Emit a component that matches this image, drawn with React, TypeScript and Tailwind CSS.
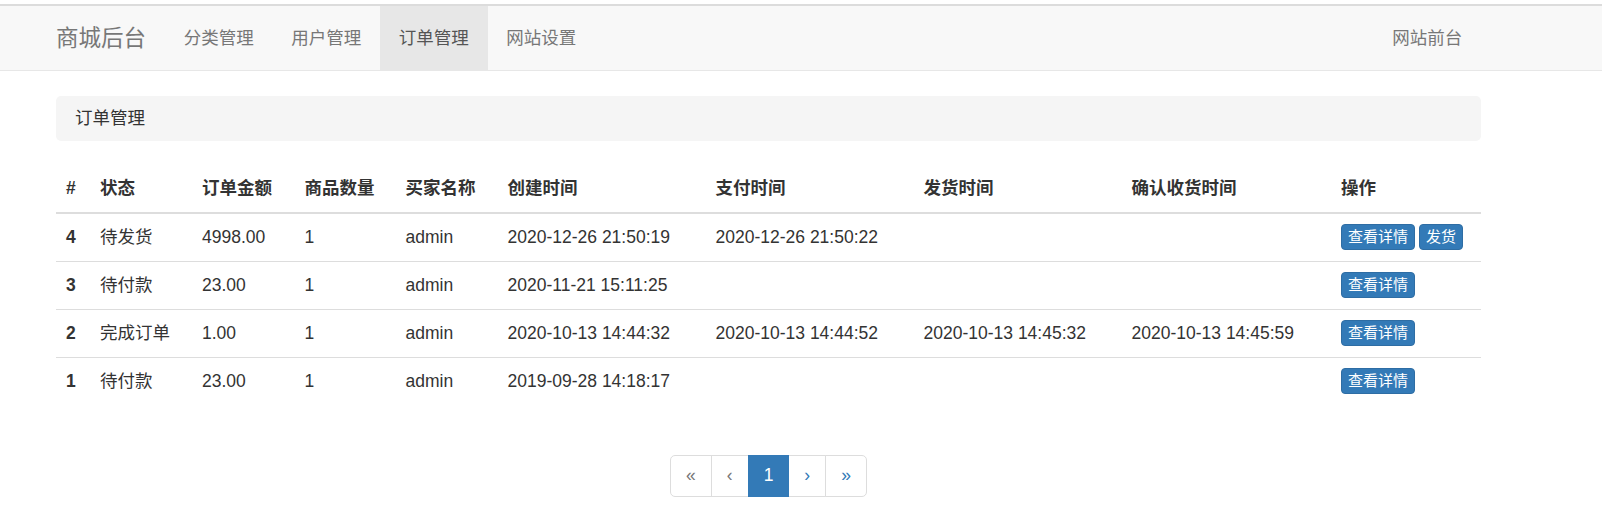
import React from "react";

const font = "font-['Liberation_Sans','Noto_Sans_CJK_SC',sans-serif]";

const navItems = ["分类管理", "用户管理", "订单管理", "网站设置"];

const cols =
  "grid grid-cols-[34px_102px_102.5px_101px_102px_208px_208px_208px_209.5px_150px]";

const headers = [
  "#",
  "状态",
  "订单金额",
  "商品数量",
  "买家名称",
  "创建时间",
  "支付时间",
  "发货时间",
  "确认收货时间",
  "操作",
];

type Order = {
  id: number;
  status: string;
  amount: string;
  count: string;
  buyer: string;
  created: string;
  paid: string;
  shipped: string;
  confirmed: string;
  ship?: boolean;
};

const orders: Order[] = [
  {
    id: 4,
    status: "待发货",
    amount: "4998.00",
    count: "1",
    buyer: "admin",
    created: "2020-12-26 21:50:19",
    paid: "2020-12-26 21:50:22",
    shipped: "",
    confirmed: "",
    ship: true,
  },
  {
    id: 3,
    status: "待付款",
    amount: "23.00",
    count: "1",
    buyer: "admin",
    created: "2020-11-21 15:11:25",
    paid: "",
    shipped: "",
    confirmed: "",
  },
  {
    id: 2,
    status: "完成订单",
    amount: "1.00",
    count: "1",
    buyer: "admin",
    created: "2020-10-13 14:44:32",
    paid: "2020-10-13 14:44:52",
    shipped: "2020-10-13 14:45:32",
    confirmed: "2020-10-13 14:45:59",
  },
  {
    id: 1,
    status: "待付款",
    amount: "23.00",
    count: "1",
    buyer: "admin",
    created: "2019-09-28 14:18:17",
    paid: "",
    shipped: "",
    confirmed: "",
  },
];

const XsButton = ({ children }: { children: React.ReactNode }) => (
  <button className="h-[26px] px-[6px] text-[15px] leading-[22px] text-white bg-[#337ab7] border border-[#2e6da4] rounded-[4px]">
    {children}
  </button>
);

const Navbar = () => (
  <div className="mt-[4px] border-t-2 border-[#dcdcdc]">
    <nav className="h-[65px] bg-[#f8f8f8] border-b border-[#e7e7e7]">
      <div className="ml-[37px] w-[1444px] h-full flex items-stretch">
        <a className="px-[19px] flex items-center text-[22.5px] leading-[25px] text-[#777]">
          商城后台
        </a>
        <ul className="flex">
          {navItems.map((item) => (
            <li key={item}>
              <a
                className={`h-full px-[18.75px] flex items-center text-[17.5px] leading-[25px] ${
                  item === "订单管理"
                    ? "bg-[#e7e7e7] text-[#555]"
                    : "text-[#777]"
                }`}
              >
                {item}
              </a>
            </li>
          ))}
        </ul>
        <a className="ml-auto px-[18.75px] flex items-center text-[17.5px] leading-[25px] text-[#777]">
          网站前台
        </a>
      </div>
    </nav>
  </div>
);

const Pagination = () => {
  const items = [
    { label: "«", disabled: true },
    { label: "‹", disabled: true },
    { label: "1", active: true },
    { label: "›" },
    { label: "»" },
  ];
  return (
    <div className="mt-[50px] flex justify-center">
      <ul className="flex">
        {items.map((item, i) => (
          <li key={i}>
            <a
              className={`h-[42.5px] px-[15px] flex items-center text-[17.5px] leading-[25px] border ${
                i > 0 ? "-ml-px" : ""
              } ${i === 0 ? "rounded-l-[5px]" : ""} ${
                i === items.length - 1 ? "rounded-r-[5px]" : ""
              } ${
                item.active
                  ? "bg-[#337ab7] border-[#337ab7] text-white relative"
                  : item.disabled
                  ? "bg-white border-[#ddd] text-[#777]"
                  : "bg-white border-[#ddd] text-[#337ab7]"
              }`}
            >
              {item.label}
            </a>
          </li>
        ))}
      </ul>
    </div>
  );
};

export default function App() {
  return (
    <div className={`${font} bg-white text-[#333] min-h-[528px]`}>
      <Navbar />

      <div className="ml-[56px] w-[1425px] mt-[25px]">
        <div className="h-[45px] px-[19px] flex items-center bg-[#f5f5f5] rounded-[5px] text-[17.5px] leading-[25px]">
          订单管理
        </div>

        <div className="mt-[25px] text-[17.5px] leading-[25px]">
          <div className={`${cols} h-[47.5px] items-center border-b-[2.5px] border-[#ddd] font-bold`}>
            {headers.map((h) => (
              <div key={h} className="px-[10px] whitespace-nowrap">
                {h}
              </div>
            ))}
          </div>

          {orders.map((o, idx) => (
            <div
              key={o.id}
              className={`${cols} items-center ${
                idx === 0 ? "h-[47px]" : "h-[48px] border-t border-[#ddd]"
              }`}
            >
              <div className="px-[10px] font-bold">{o.id}</div>
              <div className="px-[10px]">{o.status}</div>
              <div className="px-[10px]">{o.amount}</div>
              <div className="px-[10px]">{o.count}</div>
              <div className="px-[10px]">{o.buyer}</div>
              <div className="px-[10px] whitespace-nowrap">{o.created}</div>
              <div className="px-[10px] whitespace-nowrap">{o.paid}</div>
              <div className="px-[10px] whitespace-nowrap">{o.shipped}</div>
              <div className="px-[10px] whitespace-nowrap">{o.confirmed}</div>
              <div className="px-[10px] flex gap-[4px]">
                <XsButton>查看详情</XsButton>
                {o.ship && <XsButton>发货</XsButton>}
              </div>
            </div>
          ))}
        </div>

        <Pagination />
      </div>
    </div>
  );
}
